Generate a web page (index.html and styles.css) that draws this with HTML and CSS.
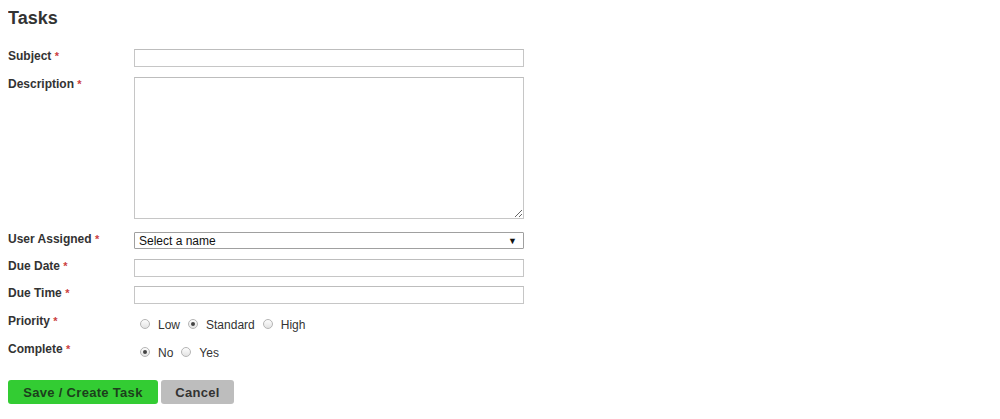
FILE: index.html
```html
<!DOCTYPE html>
<html>
<head>
<meta charset="utf-8">
<link rel="stylesheet" href="styles.css">
</head>
<body>
<h1 class="title">Tasks</h1>
<form class="form">
  <div class="row">
    <label class="label">Subject <span class="req">*</span></label>
    <input class="field" type="text">
  </div>
  <div class="row row-area">
    <label class="label">Description <span class="req">*</span></label>
    <textarea class="field area"></textarea>
  </div>
  <div class="row">
    <label class="label">User Assigned <span class="req">*</span></label>
    <div class="select"><span>Select a name</span><span class="arrow">▼</span></div>
  </div>
  <div class="row row-tight">
    <label class="label">Due Date <span class="req">*</span></label>
    <input class="field" type="text">
  </div>
  <div class="row">
    <label class="label">Due Time <span class="req">*</span></label>
    <input class="field" type="text">
  </div>
  <div class="row">
    <label class="label">Priority <span class="req">*</span></label>
    <div class="radios">
      <label class="opt"><span class="radio"></span>Low</label>
      <label class="opt"><span class="radio on"></span>Standard</label>
      <label class="opt"><span class="radio"></span>High</label>
    </div>
  </div>
  <div class="row">
    <label class="label">Complete <span class="req">*</span></label>
    <div class="radios">
      <label class="opt"><span class="radio on"></span>No</label>
      <label class="opt"><span class="radio"></span>Yes</label>
    </div>
  </div>
  <div class="actions">
    <button type="button" class="btn btn-save">Save / Create Task</button>
    <button type="button" class="btn btn-cancel">Cancel</button>
  </div>
</form>
</body>
</html>
```
FILE: styles.css
```css
body {
  margin: 8px;
  font-family: "Liberation Sans", Arial, sans-serif;
  color: #333;
  background: #fff;
}
.title {
  margin: 0;
  font-size: 18px;
  line-height: 20px;
  font-weight: bold;
  color: #333;
}
.form {
  margin-top: 21px;
  display: flex;
  flex-direction: column;
}
.row {
  display: flex;
  align-items: flex-start;
  margin-bottom: 10px;
}
.row-area {
  margin-bottom: 13px;
}
.row-tight {
  margin-bottom: 9px;
}
.label {
  width: 126px;
  flex: none;
  font-size: 12px;
  font-weight: bold;
  line-height: 14px;
  color: #333;
}
.req {
  color: #cc3f3f;
  font-size: 11px;
}
.field {
  box-sizing: border-box;
  width: 390px;
  height: 18px;
  margin: 0;
  border: 1px solid #c6c6c6;
  border-top-color: #bdbdbd;
  padding: 0 4px;
  font-family: "Liberation Sans", Arial, sans-serif;
  font-size: 12px;
  background: #fff;
  outline: none;
}
.area {
  height: 142px;
  resize: both;
  display: block;
}
.select {
  box-sizing: border-box;
  width: 390px;
  height: 17px;
  border: 1px solid #a0a0a0;
  border-radius: 1px;
  padding: 0 6px 0 4px;
  display: flex;
  align-items: center;
  justify-content: space-between;
  font-size: 12px;
  color: #111;
  background: #fff;
}
.arrow {
  font-size: 9px;
  color: #111;
}
.radios {
  display: flex;
  align-items: center;
  padding-left: 6px;
  padding-top: 4px;
  font-size: 12px;
  line-height: 14px;
  color: #333;
}
.opt {
  display: flex;
  align-items: center;
  margin-right: 8px;
}
.radio {
  box-sizing: border-box;
  width: 10px;
  height: 10px;
  border-radius: 50%;
  border: 1px solid #b5b5b5;
  background: linear-gradient(#fdfdfd, #e3e3e3);
  margin-right: 8px;
  position: relative;
  top: -1px;
  display: inline-block;
}
.radio.on::after {
  content: "";
  position: absolute;
  left: 2px;
  top: 2px;
  width: 4px;
  height: 4px;
  border-radius: 50%;
  background: #444;
}
.actions {
  display: flex;
  gap: 3px;
  margin-top: 10px;
}
.btn {
  height: 24px;
  border: none;
  border-radius: 3px;
  font-family: "Liberation Sans", Arial, sans-serif;
  font-size: 13px;
  font-weight: bold;
  letter-spacing: 0.3px;
  padding: 0;
  cursor: pointer;
}
.btn-save {
  width: 150px;
  background: #33cc33;
  color: #1c3f1c;
}
.btn-cancel {
  width: 73px;
  background: #bdbdbd;
  color: #333;
}
```
